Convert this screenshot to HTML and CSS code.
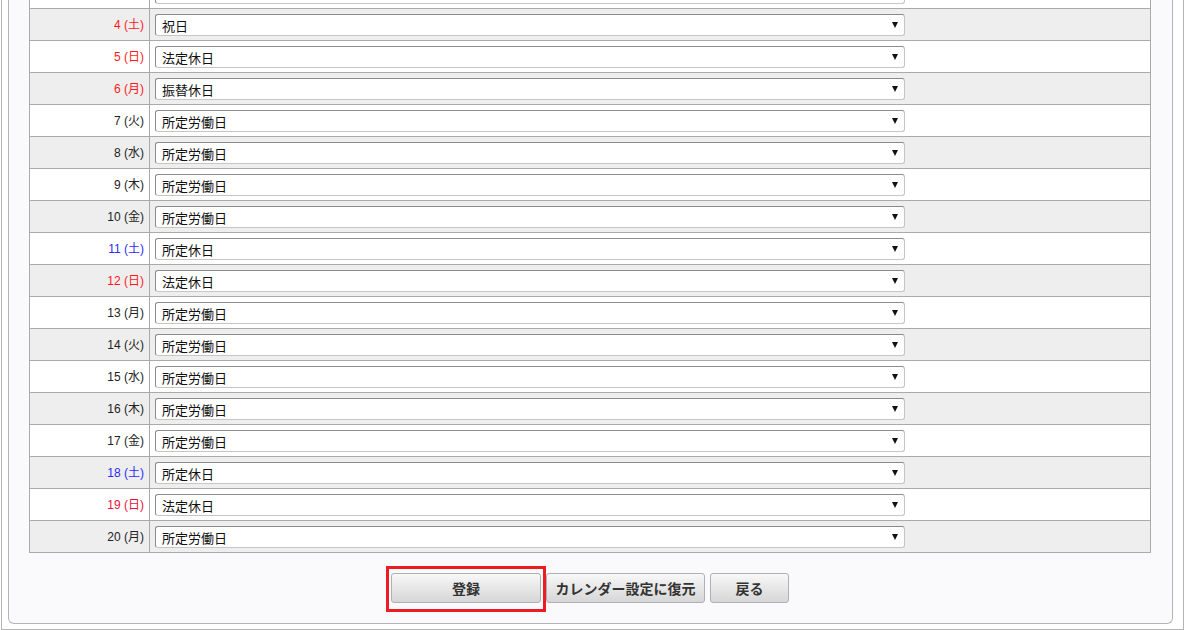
FILE: index.html
```html
<!DOCTYPE html>
<html lang="ja">
<head>
<meta charset="utf-8">
<title>カレンダー設定</title>
<link rel="stylesheet" href="styles.css">
</head>
<body>
<div class="frame">
  <div class="panel">
    <div class="table">
      <div class="row"><div class="label"></div><div class="cell"><span class="sel"></span></div></div>
      <div class="row alt"><div class="label red">4 (土)</div><div class="cell"><span class="sel">祝日</span></div></div>
      <div class="row"><div class="label red">5 (日)</div><div class="cell"><span class="sel">法定休日</span></div></div>
      <div class="row alt"><div class="label red">6 (月)</div><div class="cell"><span class="sel">振替休日</span></div></div>
      <div class="row"><div class="label">7 (火)</div><div class="cell"><span class="sel">所定労働日</span></div></div>
      <div class="row alt"><div class="label">8 (水)</div><div class="cell"><span class="sel">所定労働日</span></div></div>
      <div class="row"><div class="label">9 (木)</div><div class="cell"><span class="sel">所定労働日</span></div></div>
      <div class="row alt"><div class="label">10 (金)</div><div class="cell"><span class="sel">所定労働日</span></div></div>
      <div class="row"><div class="label blue">11 (土)</div><div class="cell"><span class="sel">所定休日</span></div></div>
      <div class="row alt"><div class="label red">12 (日)</div><div class="cell"><span class="sel">法定休日</span></div></div>
      <div class="row"><div class="label">13 (月)</div><div class="cell"><span class="sel">所定労働日</span></div></div>
      <div class="row alt"><div class="label">14 (火)</div><div class="cell"><span class="sel">所定労働日</span></div></div>
      <div class="row"><div class="label">15 (水)</div><div class="cell"><span class="sel">所定労働日</span></div></div>
      <div class="row alt"><div class="label">16 (木)</div><div class="cell"><span class="sel">所定労働日</span></div></div>
      <div class="row"><div class="label">17 (金)</div><div class="cell"><span class="sel">所定労働日</span></div></div>
      <div class="row alt"><div class="label blue">18 (土)</div><div class="cell"><span class="sel">所定休日</span></div></div>
      <div class="row"><div class="label crimson">19 (日)</div><div class="cell"><span class="sel">法定休日</span></div></div>
      <div class="row alt"><div class="label">20 (月)</div><div class="cell"><span class="sel">所定労働日</span></div></div>
    </div>
    <div class="actions">
      <span class="highlight"><button class="btn btn-main" type="button">登録</button></span>
      <button class="btn btn-restore" type="button">カレンダー設定に復元</button>
      <button class="btn btn-back" type="button">戻る</button>
    </div>
  </div>
</div>
</body>
</html>
```
FILE: styles.css
```css
* { box-sizing: border-box; }

html, body {
  margin: 0;
  padding: 0;
  background: #ffffff;
  overflow: hidden;
}

body {
  padding-left: 1px;
  font-family: "Liberation Sans", "Noto Sans CJK JP", sans-serif;
  color: #222;
}

.frame {
  width: 1183px;
  height: 630px;
  border-left: 1px solid #b4b4b4;
  border-right: 1px solid #b4b4b4;
  border-bottom: 1px solid #b4b4b4;
  padding-left: 6px;
  overflow: hidden;
}

.panel {
  width: 1165px;
  margin-top: -24px;
  background: #fafafd;
  border-left: 1px solid #b4b4b4;
  border-right: 1px solid #b4b4b4;
  border-bottom: 1px solid #b4b4b4;
  border-radius: 0 0 6px 6px;
  padding: 0 21px 20px 20px;
}

.table {
  width: 1122px;
  border-left: 1px solid #aaaaaa;
  border-right: 1px solid #aaaaaa;
  border-bottom: 1px solid #aaaaaa;
}

.row {
  display: grid;
  grid-template-columns: 120px 1fr;
  height: 32px;
  border-top: 1px solid #aaaaaa;
  background: #ffffff;
}

.row.alt { background: #eeeeee; }

.label {
  border-right: 1px solid #aaaaaa;
  text-align: right;
  padding: 0 5px 3px 0;
  font-size: 12px;
  display: flex;
  align-items: center;
  justify-content: flex-end;
  color: #222;
}

.label.red { color: #ff1a1a; }
.label.crimson { color: #e8123c; }
.label.blue { color: #2a2aff; }

.cell {
  display: flex;
  align-items: center;
  padding-left: 5px;
}

.sel {
  position: relative;
  display: flex;
  align-items: center;
  width: 750px;
  height: 22px;
  padding: 2px 0 0 6px;
  background: #ffffff;
  border: 1px solid;
  border-color: #8c8c8c #c6c6c6 #c6c6c6 #8c8c8c;
  border-radius: 3px;
  font-family: "Noto Sans CJK JP", sans-serif;
  font-size: 13px;
  color: #111;
}

.sel::after {
  content: "";
  position: absolute;
  right: 6px;
  top: 7px;
  border-left: 3.5px solid transparent;
  border-right: 3.5px solid transparent;
  border-top: 6px solid #111;
}

.actions {
  display: flex;
  justify-content: center;
  gap: 5px;
  margin-top: 20px;
}

.highlight {
  position: relative;
  display: inline-flex;
}

.highlight::after {
  content: "";
  position: absolute;
  left: -5px;
  right: -5px;
  top: -7px;
  bottom: -9px;
  border: 3px solid #ec1c24;
  pointer-events: none;
}

.btn {
  height: 30px;
  margin: 0;
  padding: 0;
  border: 1px solid #b0b0b0;
  border-radius: 3px;
  background: linear-gradient(#f8f8f8, #d6d6d6);
  font-family: "Noto Sans CJK JP", sans-serif;
  font-size: 14px;
  font-weight: bold;
  color: #333;
  cursor: pointer;
}

.btn-main { width: 150px; }
.btn-restore { width: 159px; }
.btn-back { width: 79px; }
```
